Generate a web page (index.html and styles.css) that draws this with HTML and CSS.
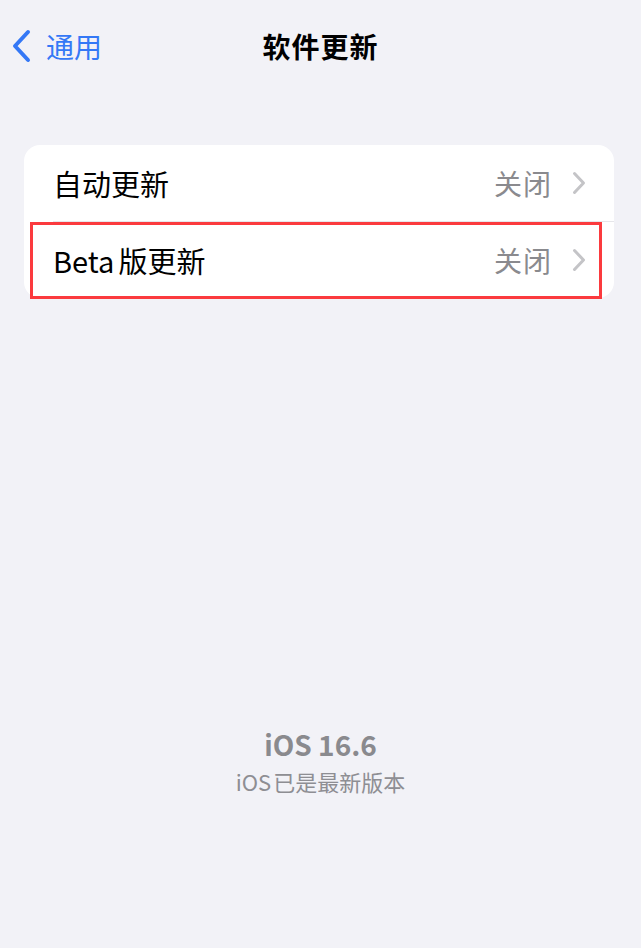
FILE: index.html
```html
<!DOCTYPE html>
<html>
<head>
    <title>软件更新</title>
    <link rel="stylesheet" href="styles.css">
</head>
<body>
<div class="screen">
    <div class="nav-bar">
        <div class="nav-back">
            <svg class="back-icon" width="20" height="34" viewBox="0 0 20 34">
                <path d="M17 3 L4 17 L17 31" fill="none" stroke="#3478f6" stroke-width="4" stroke-linecap="round" stroke-linejoin="round"/>
            </svg>
            <span>通用</span>
        </div>
        <h1 class="nav-title">软件更新</h1>
    </div>

    <div class="settings-card">
        <div class="settings-row">
            <span class="row-label">自动更新</span>
            <span class="row-value">关闭</span>
            <svg class="chevron" width="14" height="24" viewBox="0 0 14 24">
                <path d="M2.5 2.5 L11.5 12 L2.5 21.5" fill="none" stroke="#c4c4c7" stroke-width="3" stroke-linecap="round" stroke-linejoin="round"/>
            </svg>
        </div>
        <div class="row-divider"></div>
        <div class="settings-row">
            <span class="row-label"><span class="latin">Beta</span>版更新</span>
            <span class="row-value">关闭</span>
            <svg class="chevron" width="14" height="24" viewBox="0 0 14 24">
                <path d="M2.5 2.5 L11.5 12 L2.5 21.5" fill="none" stroke="#c4c4c7" stroke-width="3" stroke-linecap="round" stroke-linejoin="round"/>
            </svg>
        </div>
        <div class="highlight-box"></div>
    </div>

    <div class="version-info">
        <div class="version-name">iOS 16.6</div>
        <div class="version-status"><span class="latin">iOS</span>已是最新版本</div>
    </div>
</div>
</body>
</html>
```

FILE: styles.css
```css
* {
    margin: 0;
    padding: 0;
    box-sizing: border-box;
}

body {
    font-family: 'Noto Sans CJK SC', 'Noto Sans', sans-serif;
    background-color: #f2f2f7;
    color: #000000;
    width: 641px;
    height: 948px;
    overflow: hidden;
}

.screen {
    display: flex;
    flex-direction: column;
    height: 100%;
}

.nav-bar {
    position: relative;
    height: 92px;
}

.nav-back {
    position: absolute;
    left: 11px;
    top: 29px;
    display: flex;
    align-items: center;
    gap: 15px;
    color: #3478f6;
    font-size: 28px;
    line-height: 34px;
}

.nav-title {
    position: absolute;
    top: 29px;
    left: 0;
    right: 0;
    text-align: center;
    font-size: 28px;
    font-weight: 700;
    line-height: 34px;
    letter-spacing: 1px;
}

.settings-card {
    position: relative;
    margin: 53px 27px 0 24px;
    background: #ffffff;
    border-radius: 16px;
    display: flex;
    flex-direction: column;
}

.settings-row {
    display: flex;
    align-items: center;
    height: 76px;
    padding: 0 28px 0 29px;
}

.row-label {
    flex: 1;
    font-size: 29px;
    line-height: 34px;
}

.latin {
    margin-right: 4px;
}

.row-value {
    font-size: 28px;
    line-height: 34px;
    color: #8a8a8e;
    margin-right: 20px;
    letter-spacing: 1px;
}

.chevron {
    display: block;
}

.row-divider {
    height: 1px;
    background: #e6e6ea;
    margin-left: 29px;
}

.highlight-box {
    position: absolute;
    left: 6px;
    top: 77px;
    width: 572px;
    height: 77px;
    border: 3px solid #fb3a3e;
}

.version-info {
    margin-top: 429px;
    text-align: center;
    color: #8a8a8e;
}

.version-name {
    font-size: 28px;
    font-weight: 700;
    line-height: 34px;
}

.version-status {
    font-size: 22px;
    line-height: 28px;
    margin-top: 6px;
    color: #8e8e93;
}

.version-status .latin {
    margin-right: 2px;
}
```
